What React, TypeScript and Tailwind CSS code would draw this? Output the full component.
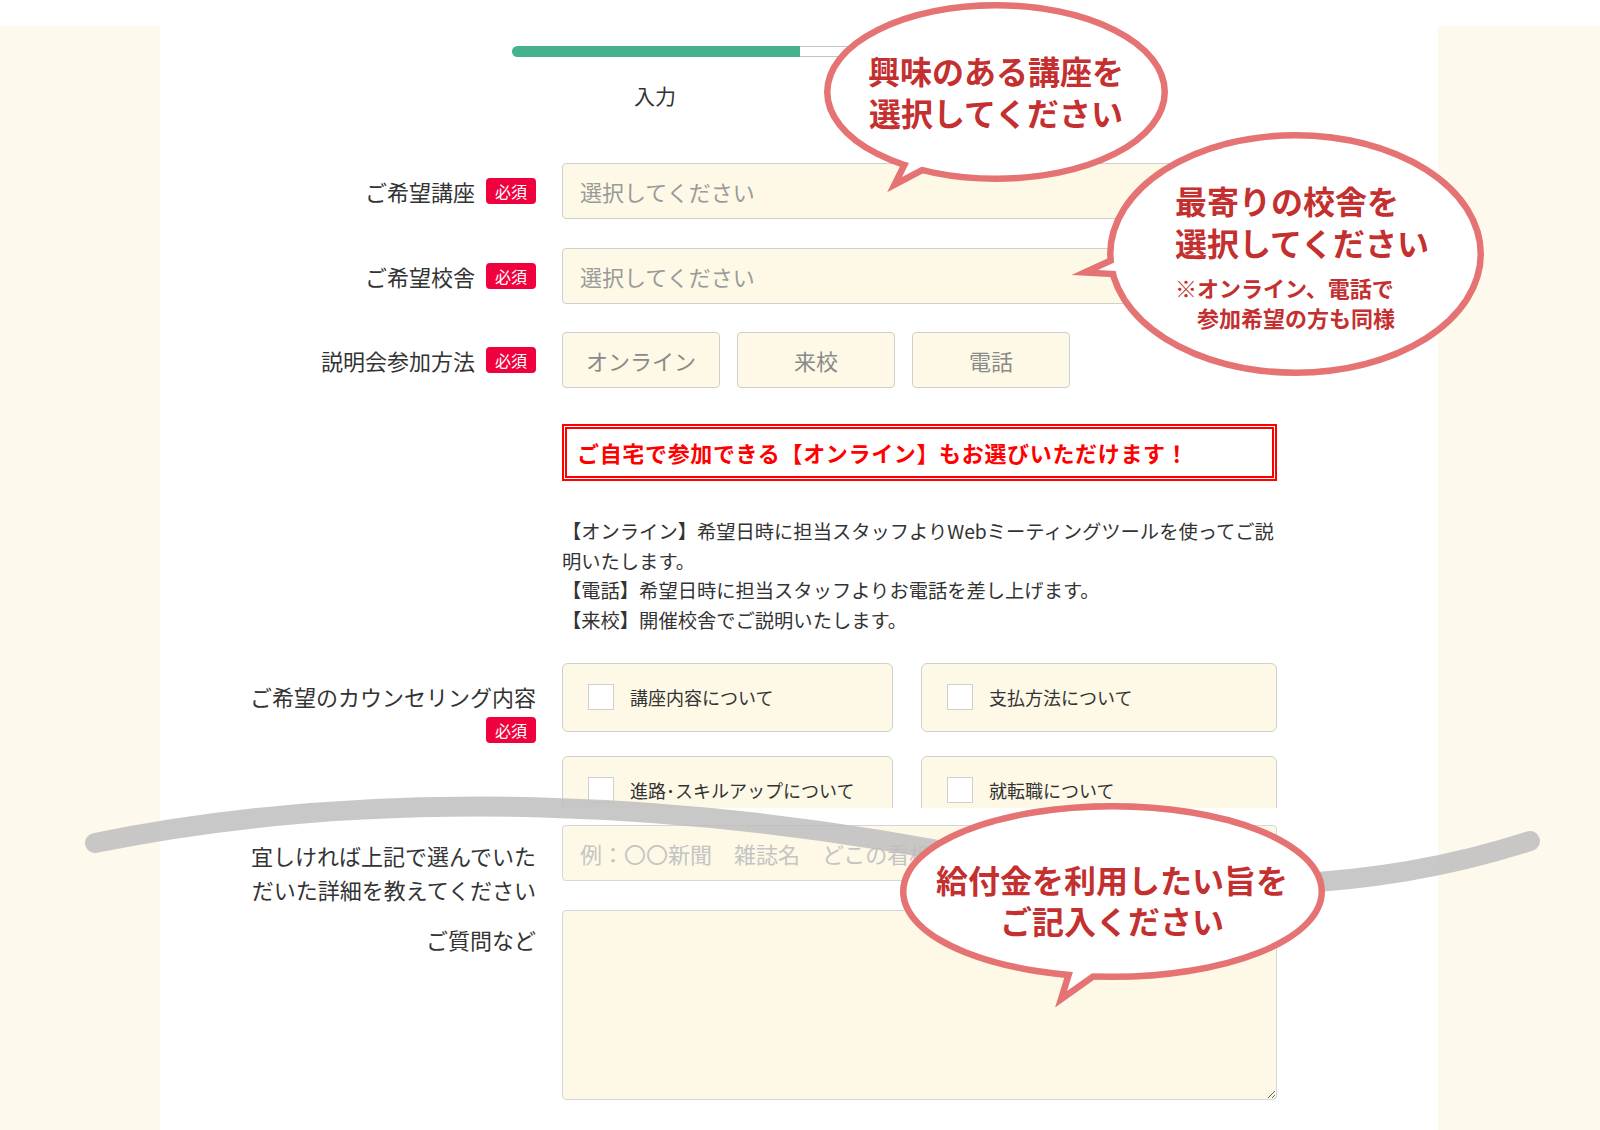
import React from 'react';

const Badge = () => (
  <span className="inline-flex h-[26px] w-[50px] shrink-0 items-center justify-center rounded-[4px] bg-[#f0003c] text-[16px] leading-none text-white">
    必須
  </span>
);

const CheckCard = ({ label, w }: { label: string; w: string }) => (
  <div className={`${w} flex h-[69px] shrink-0 items-center rounded-[6px] border-[1.5px] border-[#cfcfcf] bg-[#fef9e6] pl-[25px]`}>
    <span className="h-[26px] w-[26px] shrink-0 border-[1.5px] border-[#cfcfcf] bg-white" />
    <span className="ml-[16px] text-[18px] text-[#333]">{label}</span>
  </div>
);

interface Bubble {
  cx: number;
  cy: number;
  rx: number;
  ry: number;
  tail: string;
}

const bubbles: Bubble[] = [
  { cx: 996, cy: 92, rx: 165.5, ry: 83.5, tail: '902,177 922,137 942,156' },
  { cx: 1295.5, cy: 254, rx: 182, ry: 115.5, tail: '1098,270 1135,253 1135,272' },
  { cx: 1112.5, cy: 891.5, rx: 206, ry: 82, tail: '1067,991 1082,943 1108,962' },
];

const Overlay = () => (
  <>
    <svg className="pointer-events-none absolute left-0 top-0" width="1600" height="1130" viewBox="0 0 1600 1130">
      {/* 切り取り線 */}
      <path
        d="M95 843 C380 785 700 800 1000 862 C1200 900 1380 890 1530 841"
        fill="none"
        stroke="#bebebe"
        strokeOpacity="0.85"
        strokeWidth="20"
        strokeLinecap="round"
      />
      {bubbles.map((b, i) => (
        <g key={i}>
          <g fill="#fff" stroke="#e57373" strokeWidth="13" strokeLinejoin="miter" strokeMiterlimit="10">
            <ellipse cx={b.cx} cy={b.cy} rx={b.rx} ry={b.ry} />
            <polygon points={b.tail} />
          </g>
          <g fill="#fff">
            <ellipse cx={b.cx} cy={b.cy} rx={b.rx} ry={b.ry} />
            <polygon points={b.tail} />
          </g>
        </g>
      ))}
    </svg>

    <div className="absolute left-[826px] top-[49px] w-[340px] text-center text-[32px] font-bold leading-[42px] text-[#c3302f]">
      興味のある講座を
      <br />
      選択してください
    </div>

    <div className="absolute left-[1175px] top-[179px] font-bold text-[#c3302f]">
      <div className="text-[32px] leading-[42px]">
        最寄りの校舎を
        <br />
        選択してください
      </div>
      <div className="mt-[9px] text-[22px] leading-[30px]">
        ※オンライン、電話で
        <div className="pl-[22px]">参加希望の方も同様</div>
      </div>
    </div>

    <div className="absolute left-[912px] top-[859px] w-[400px] text-center text-[32px] font-bold leading-[41px] text-[#c3302f]">
      給付金を利用したい旨を
      <br />
      ご記入ください
    </div>
  </>
);

export default function App() {
  return (
    <div className="relative h-[1130px] w-[1600px] overflow-hidden bg-white font-['Noto_Sans_CJK_JP','Noto_Sans',sans-serif] text-[#333]">
      <div className="mt-[26px] flex h-[1104px]">
        {/* 左余白 */}
        <div className="w-[160px] shrink-0 bg-[#fdf9ec]" />

        {/* フォーム */}
        <div className="flex-1 bg-white">
          {/* ステップ */}
          <div className="ml-[352px] pt-[20px]">
            <div className="flex w-[576px]">
              <div className="h-[11px] w-[288px] rounded-l-full bg-[#45b28b]" />
              <div className="h-[11px] flex-1 rounded-r-full border-y border-r border-[#c4c4c4] bg-white" />
            </div>
            <div className="ml-[122px] mt-[23px] text-[21px] leading-[30px] text-[#333]">入力</div>
          </div>

          <div className="ml-[40px] mt-[53px]">
            {/* ご希望講座 */}
            <div className="flex">
              <div className="flex w-[336px] items-center justify-end gap-[11px]">
                <span className="text-[22px]">ご希望講座</span>
                <Badge />
              </div>
              <input
                readOnly
                placeholder="選択してください"
                className="ml-[26px] h-[56px] w-[715px] rounded-[4px] border-[1.5px] border-[#cfcfcf] bg-[#fef9e6] pl-[17px] text-[22px] outline-none placeholder:text-[#9a9a9a]"
              />
            </div>

            {/* ご希望校舎 */}
            <div className="mt-[29px] flex">
              <div className="flex w-[336px] items-center justify-end gap-[11px]">
                <span className="text-[22px]">ご希望校舎</span>
                <Badge />
              </div>
              <input
                readOnly
                placeholder="選択してください"
                className="ml-[26px] h-[56px] w-[715px] rounded-[4px] border-[1.5px] border-[#cfcfcf] bg-[#fef9e6] pl-[17px] text-[22px] outline-none placeholder:text-[#9a9a9a]"
              />
            </div>

            {/* 説明会参加方法 */}
            <div className="mt-[28px] flex">
              <div className="flex w-[336px] items-center justify-end gap-[11px]">
                <span className="text-[22px]">説明会参加方法</span>
                <Badge />
              </div>
              <div className="ml-[26px] flex w-[715px] gap-[17px]">
                {['オンライン', '来校', '電話'].map((t) => (
                  <div
                    key={t}
                    className="flex h-[56px] w-[158px] items-center justify-center rounded-[4px] border-[1.5px] border-[#cfcfcf] bg-[#fef9e6] text-[22px] text-[#8a8a8a]"
                  >
                    {t}
                  </div>
                ))}
              </div>
            </div>

            {/* お知らせ */}
            <div className="ml-[362px] mt-[36px] flex h-[57px] w-[715px] items-center border-[5px] border-double border-[#f00] pl-[10px] text-[22px] font-bold tracking-[0.03em] text-[#f00]">
              ご自宅で参加できる【オンライン】もお選びいただけます！
            </div>

            <div className="ml-[362px] mt-[36px] w-[715px] text-[19.3px] leading-[29.7px] text-[#333]">
              【オンライン】希望日時に担当スタッフよりWebミーティングツールを使ってご説明いたします。
              <br />
              【電話】希望日時に担当スタッフよりお電話を差し上げます。
              <br />
              【来校】開催校舎でご説明いたします。
            </div>

            {/* カウンセリング内容 */}
            <div className="mt-[27px] flex">
              <div className="flex w-[336px] flex-col items-end pt-[18px]">
                <span className="text-[22px] leading-[30px]">ご希望のカウンセリング内容</span>
                <span className="mt-[6px]">
                  <Badge />
                </span>
              </div>
              <div className="ml-[26px] w-[715px]">
                <div className="flex gap-[28px]">
                  <CheckCard w="w-[331px]" label="講座内容について" />
                  <CheckCard w="w-[356px]" label="支払方法について" />
                </div>
                <div className="mt-[24px] h-[52px] overflow-hidden">
                  <div className="flex gap-[28px]">
                    <CheckCard w="w-[331px]" label="進路･スキルアップについて" />
                    <CheckCard w="w-[356px]" label="就転職について" />
                  </div>
                </div>
              </div>
            </div>

            {/* 詳細 */}
            <div className="mt-[17px] flex items-start">
              <div className="w-[336px] pt-[13px] text-right text-[22px] leading-[34px]">
                宜しければ上記で選んでいた
                <br />
                だいた詳細を教えてください
              </div>
              <input
                readOnly
                placeholder="例：〇〇新聞　雑誌名　どこの看板など"
                className="ml-[26px] h-[56px] w-[715px] rounded-[4px] border-[1.5px] border-[#d6d6d6] bg-[#fef9e6] pl-[17px] text-[22px] outline-none placeholder:text-[#c4c4c4]"
              />
            </div>

            {/* ご質問など */}
            <div className="mt-[4px] flex items-start">
              <div className="w-[336px] pt-[12px] text-right text-[22px] leading-[34px]">ご質問など</div>
              <textarea
                readOnly
                className="ml-[26px] h-[190px] w-[715px] rounded-[4px] border-[1.5px] border-[#d6d6d6] bg-[#fef9e6] outline-none"
              />
            </div>
          </div>
        </div>

        {/* 右余白 */}
        <div className="w-[162px] shrink-0 bg-[#fdf9ec]" />
      </div>

      <Overlay />
    </div>
  );
}
